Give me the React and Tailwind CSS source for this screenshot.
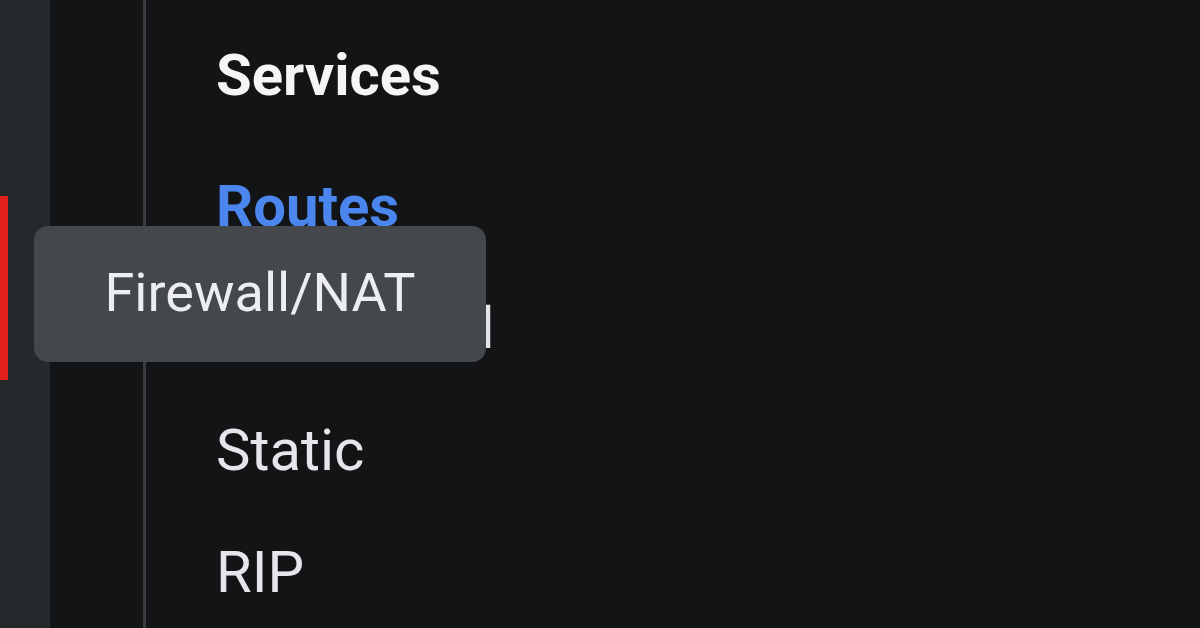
import React from 'react';

const items = [
  { label: 'IP Protocol', cls: 'tracking-[-0.6px]' },
  { label: 'Static', cls: '' },
  { label: 'RIP', cls: '' },
];

export default function App() {
  return (
    <div className="relative flex h-[628px] w-[1200px] overflow-hidden bg-[#131416] font-['Roboto',sans-serif]">
      {/* left rail */}
      <div className="relative w-[50px] shrink-0 bg-[#26292c]">
        <div className="absolute left-0 top-[196px] h-[184px] w-[8px] bg-[#e3201b]" />
      </div>

      <div className="w-[93px] shrink-0" />
      <div className="w-[3px] shrink-0 bg-[#3a3c3f]" />

      {/* menu */}
      <div className="flex flex-col pl-[70px] pt-[14px] text-[58px] leading-[122px]">
        <div className="mb-[9px] font-bold text-[#f4f5f6]">Services</div>
        <div className="font-bold text-[#4a86ee]">Routes</div>
        {items.map(it => (
          <div key={it.label} className={`text-[#e4e6e9] ${it.cls}`}>{it.label}</div>
        ))}
      </div>

      {/* tooltip */}
      <div className="absolute left-[34px] top-[226px] flex h-[136px] w-[452px] items-center justify-center rounded-[14px] bg-[#44474b] pb-[4px] text-[54px] text-[#eceef0]">
        Firewall/NAT
      </div>
    </div>
  );
}
